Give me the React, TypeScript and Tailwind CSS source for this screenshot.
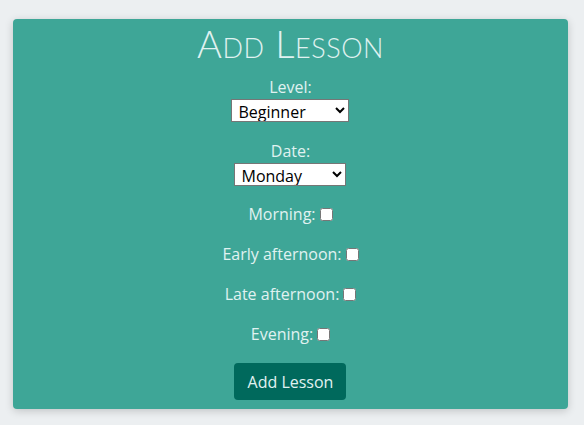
import React from 'react';

const slots = ['Morning', 'Early afternoon', 'Late afternoon', 'Evening'];

export default function App() {
  return (
    <div className="min-h-[425px] w-full bg-[#eceff1] pt-[19px] px-[13px] font-['Open_Sans',sans-serif] text-[#e0f2f1]">
      <div className="flex h-[390px] w-[555px] flex-col items-center rounded-[4px] bg-[#3ea697] shadow-[0_2px_8px_rgba(0,0,0,0.18)]">
        {/* Title */}
        <h1 className="mt-[2px] font-['Lato',sans-serif] text-[38px] font-light leading-[44px] tracking-[0.5px] [font-variant:small-caps]">
          Add Lesson
        </h1>

        <form className="flex flex-col items-center">
          <label className="mt-[12px] text-[16px] leading-[20px]">Level:</label>
          <select className="mt-[2px] h-[23px] w-[118px] border border-[#767676] bg-white pl-[2px] text-[16px] leading-[20px] text-black">
            <option>Beginner</option>
            <option>Intermediate</option>
            <option>Advanced</option>
          </select>

          <label className="mt-[19px] text-[16px] leading-[20px]">Date:</label>
          <select className="mt-[2px] h-[23px] w-[112px] border border-[#767676] bg-white pl-[2px] text-[16px] leading-[20px] text-black">
            <option>Monday</option>
            <option>Tuesday</option>
            <option>Wednesday</option>
            <option>Thursday</option>
            <option>Friday</option>
          </select>

          <div className="mt-[18px] flex flex-col items-center gap-[20px]">
            {slots.map((s) => (
              <label key={s} className="flex h-[20px] items-center text-[16px] leading-[20px]">
                {s}:
                <input type="checkbox" className="ml-[4px] h-[13px] w-[13px]" />
              </label>
            ))}
          </div>

          <button
            type="button"
            className="mt-[19px] h-[37px] w-[112px] rounded-[4px] bg-[#00695c] text-[16px] text-[#e0f2f1]"
          >
            Add Lesson
          </button>
        </form>
      </div>
    </div>
  );
}
